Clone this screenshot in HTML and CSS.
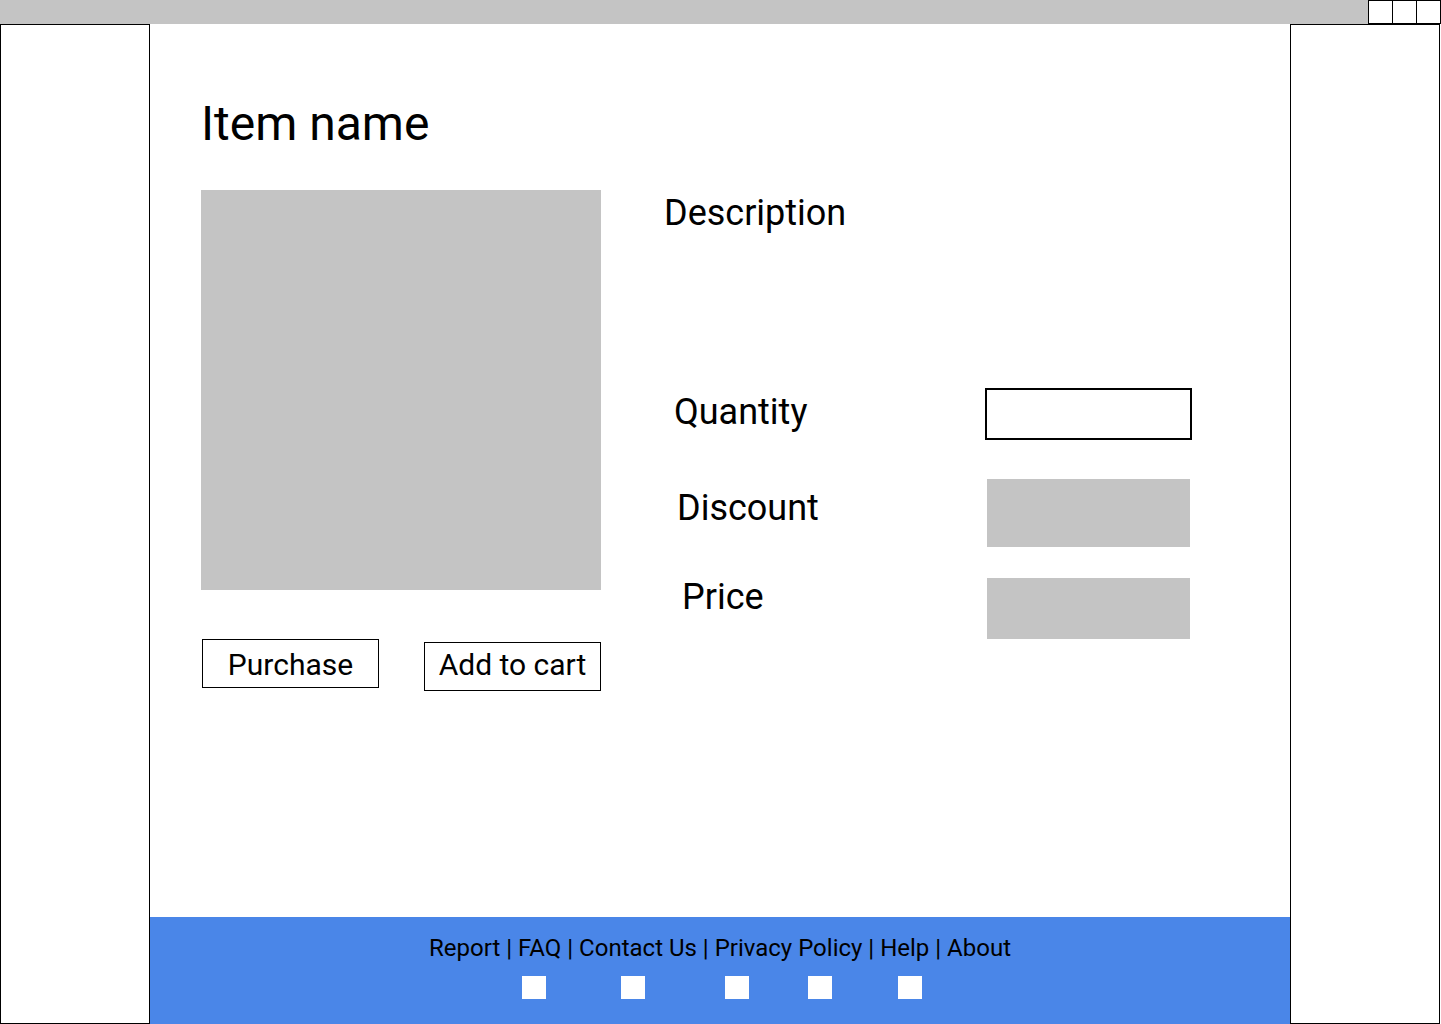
FILE: index.html
```html
<!DOCTYPE html>
<html lang="en">
<head>
<meta charset="utf-8">
<title>Item</title>
<link rel="stylesheet" href="styles.css">
</head>
<body>
<div class="page">
  <div class="topbar">
    <div class="win-controls">
      <span class="win-btn"></span>
      <span class="win-btn"></span>
      <span class="win-btn"></span>
    </div>
  </div>
  <div class="layout">
    <aside class="side side-left"></aside>
    <main class="main">
      <section class="content">
        <h1 class="title">Item name</h1>
        <div class="product">
          <div class="left-col">
            <div class="image"></div>
            <div class="actions">
              <div class="btn btn-purchase">Purchase</div>
              <div class="btn btn-cart">Add to cart</div>
            </div>
          </div>
          <div class="right-col">
            <div class="desc">Description</div>
            <div class="row row-qty">
              <div class="label label-qty">Quantity</div>
              <div class="qty-input"></div>
            </div>
            <div class="row row-discount">
              <div class="label label-discount">Discount</div>
              <div class="value value-discount"></div>
            </div>
            <div class="row row-price">
              <div class="label label-price">Price</div>
              <div class="value value-price"></div>
            </div>
          </div>
        </div>
      </section>
      <footer class="footer">
        <div class="links">Report | FAQ | Contact Us | Privacy Policy | Help | About</div>
        <div class="socials">
          <span class="sq sq1"></span>
          <span class="sq sq2"></span>
          <span class="sq sq3"></span>
          <span class="sq sq4"></span>
          <span class="sq sq5"></span>
        </div>
      </footer>
    </main>
    <aside class="side side-right"></aside>
  </div>
</div>
</body>
</html>
```

FILE: styles.css
```css
* { box-sizing: border-box; }

html, body {
  margin: 0;
  padding: 0;
  background: #ffffff;
}

body {
  font-family: Roboto, "Liberation Sans", sans-serif;
  color: #000;
  width: 1441px;
  height: 1024px;
  overflow: hidden;
}

.page {
  display: flex;
  flex-direction: column;
}

.topbar {
  height: 24px;
  background: #c4c4c4;
  display: flex;
  justify-content: flex-end;
}

.win-controls {
  display: flex;
}

.win-btn {
  width: 25px;
  height: 24px;
  background: #fff;
  border: 1px solid #000;
  margin-left: -1px;
}

.layout {
  display: flex;
  height: 1000px;
}

.side {
  width: 150px;
  height: 1000px;
  border: 1px solid #000;
  background: #fff;
  flex: none;
}

.main {
  width: 1140px;
  flex: none;
  display: flex;
  flex-direction: column;
}

.content {
  flex: 1;
  padding: 72px 0 0 51px;
}

.title {
  margin: 0;
  font-size: 48px;
  font-weight: 400;
  line-height: 56px;
}

.product {
  display: flex;
  margin-top: 38px;
  gap: 61px;
}

.left-col {
  width: 400px;
  flex: none;
}

.image {
  width: 400px;
  height: 400px;
  background: #c4c4c4;
}

.actions {
  display: flex;
  justify-content: space-between;
  align-items: flex-start;
  margin-top: 49px;
  padding-left: 1px;
}

.btn {
  width: 177px;
  border: 1px solid #000;
  font-size: 30px;
  line-height: 35px;
  text-align: center;
  background: #fff;
}

.btn-purchase {
  padding: 7px 0 5px;
}

.btn-cart {
  margin-top: 3px;
  padding: 4px 0 8px;
}

.right-col {
  flex: 1;
}

.desc {
  font-size: 36px;
  line-height: 42px;
  margin-top: 2px;
  padding-left: 2px;
}

.row {
  display: flex;
  align-items: flex-start;
}

.label {
  font-size: 36px;
  line-height: 42px;
}

.row-qty { margin-top: 154px; }
.label-qty { margin-top: 3px; margin-left: 12px; width: 311px; }
.qty-input {
  width: 207px;
  height: 52px;
  border: 2px solid #000;
  background: #fff;
}

.row-discount { margin-top: 37px; }
.label-discount { margin-top: 10px; margin-left: 15px; width: 310px; }
.value-discount { margin-top: 2px; height: 68px; }

.row-price { margin-top: 23px; }
.label-price { margin-top: 6px; margin-left: 20px; width: 305px; }
.value-price { margin-top: 8px; height: 61px; }

.value {
  width: 203px;
  background: #c4c4c4;
}

.footer {
  height: 107px;
  flex: none;
  background: #4a86e8;
  padding-top: 17px;
}

.links {
  text-align: center;
  font-size: 24px;
  line-height: 28px;
  color: #000;
}

.socials {
  display: flex;
  margin-top: 14px;
}

.sq {
  width: 24px;
  height: 23px;
  background: #fff;
  flex: none;
}

.sq1 { margin-left: 372px; }
.sq2 { margin-left: 75px; }
.sq3 { margin-left: 80px; }
.sq4 { margin-left: 59px; }
.sq5 { margin-left: 66px; }
```
